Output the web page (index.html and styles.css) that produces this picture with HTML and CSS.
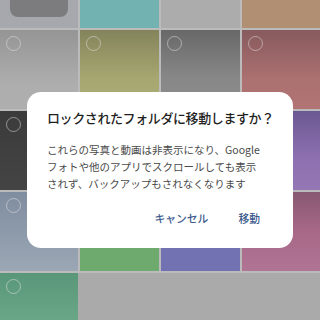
FILE: index.html
```html
<!DOCTYPE html>
<html lang="ja">
<head>
<meta charset="utf-8">
<link rel="stylesheet" href="styles.css">
</head>
<body>
<div class="screen">
  <div class="grid">
    <div class="cell c11"><div class="pill"></div></div>
    <div class="cell c12"></div>
    <div class="cell c13"></div>
    <div class="cell c14"></div>

    <div class="cell c21"><span class="sel"></span></div>
    <div class="cell c22"><span class="sel"></span></div>
    <div class="cell c23"><span class="sel"></span></div>
    <div class="cell c24"><span class="sel"></span></div>

    <div class="cell c31"><span class="sel"></span></div>
    <div class="cell c32"><span class="sel"></span></div>
    <div class="cell c33"><span class="sel"></span></div>
    <div class="cell c34"><span class="sel"></span></div>

    <div class="cell c41"><span class="sel"></span></div>
    <div class="cell c42"><span class="sel"></span></div>
    <div class="cell c43"><span class="sel"></span></div>
    <div class="cell c44"><span class="sel"></span></div>

    <div class="cell c51"><span class="sel"></span></div>
    <div class="cell empty"></div>
  </div>

  <div class="dialog">
    <div class="title">ロックされたフォルダに移動しますか？</div>
    <div class="body">これらの写真と動画は非表示になり、Google<br>フォトや他のアプリでスクロールしても表示<br>されず、バックアップもされなくなります</div>
    <div class="actions">
      <span class="btn">キャンセル</span>
      <span class="btn">移動</span>
    </div>
  </div>
</div>
</body>
</html>
```

FILE: styles.css
```css
html, body {
  margin: 0;
  padding: 0;
  width: 320px;
  height: 320px;
  overflow: hidden;
  background: #aaaaaa;
  font-family: "Noto Sans CJK JP", "Noto Sans", sans-serif;
}

.screen {
  position: relative;
  width: 320px;
  height: 320px;
  overflow: hidden;
}

.grid {
  display: grid;
  grid-template-columns: 78px 79px 79px 78px;
  grid-auto-rows: 79px;
  column-gap: 2px;
  row-gap: 2px;
  margin-top: -51px;
  background: #bbbbbb;
}

.cell {
  display: flex;
  align-items: flex-start;
  justify-content: flex-start;
  padding: 6px;
  box-sizing: border-box;
}

.sel {
  width: 13px;
  height: 13px;
  border: 1px solid rgba(230, 230, 230, 0.5);
  border-radius: 50%;
}

.c11 { background: #a7a8ad; align-items: flex-end; justify-content: center; padding: 0 0 11px 0; }
.pill {
  width: 58px;
  height: 40px;
  background: #7c7c7e;
  border-radius: 8px;
  margin-left: -1px;
}
.c12 { background: #72b2b1; }
.c13 { background: #acacac; }
.c14 { background: #b18f73; }

.c21 { background: linear-gradient(#959595, #aeaeae 70%); }
.c22 { background: linear-gradient(#84845c, #a6a670 60%, #aeae78); }
.c23 { background: linear-gradient(#686868, #878787 60%, #8e8e8e); }
.c24 { background: linear-gradient(#875a5e, #ab7070 60%, #b27474); }

.c31 { background: linear-gradient(#3b3b3b, #444444); }
.c32 { background: #8a8a8a; }
.c33 { background: #8a8a8a; }
.c34 { background: linear-gradient(#6b5893, #8e70b0 60%, #9577b6); }

.c41 { background: linear-gradient(#7f8da0, #9ba7b4); }
.c42 { background: #6eaa6e; }
.c43 { background: #7272b2; }
.c44 { background: linear-gradient(#875870, #a86888 50%, #b07494); }

.c51 { background: linear-gradient(#5a977a, #72b18f); }
.empty {
  grid-column: span 3;
  background: #aaaaaa;
  margin: 0 -2px 0 -2px;
}

.dialog {
  position: absolute;
  left: 27px;
  top: 92px;
  width: 266px;
  height: 156px;
  box-sizing: border-box;
  background: #ffffff;
  border-radius: 14px;
  padding: 17px 20px 0 20px;
  display: flex;
  flex-direction: column;
}

.title {
  font-size: 13px;
  line-height: 18px;
  font-weight: 500;
  color: #1f1f1f;
  white-space: nowrap;
  letter-spacing: -0.4px;
}

.body {
  margin-top: 14px;
  font-size: 10.5px;
  line-height: 17px;
  color: #4a4a4a;
  white-space: nowrap;
}

.actions {
  display: flex;
  justify-content: flex-end;
  gap: 30px;
  margin-top: 18px;
  padding-right: 13px;
}

.btn {
  font-size: 10.8px;
  line-height: 16px;
  font-weight: 500;
  color: #3d5a8c;
}
```
